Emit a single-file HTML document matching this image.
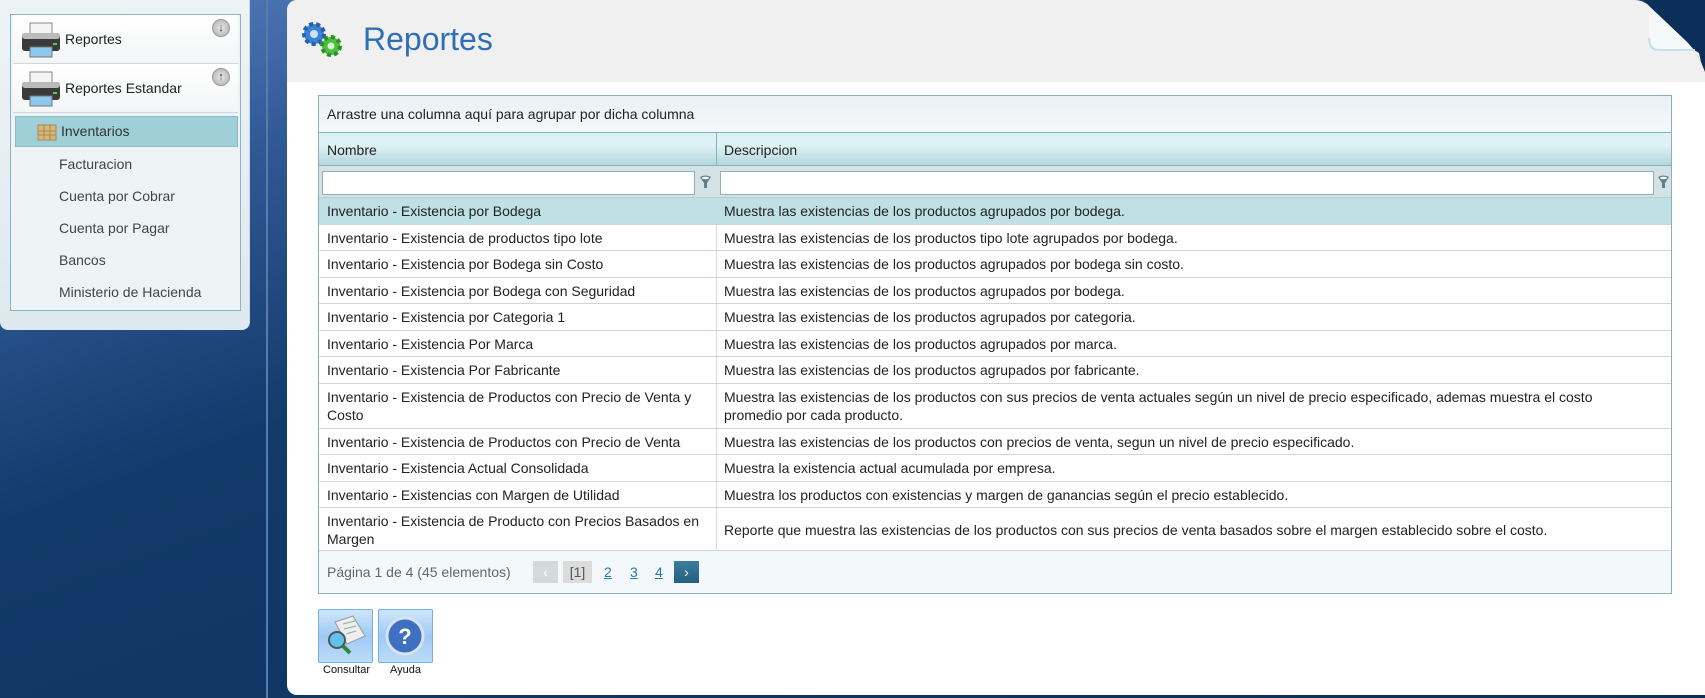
<!DOCTYPE html>
<html><head><meta charset="utf-8"><style>
*{box-sizing:border-box;margin:0;padding:0}
body{width:1705px;height:698px;overflow:hidden;position:relative;font-family:"Liberation Sans",sans-serif;background:linear-gradient(160deg,#5a82c4 0%,#2f5a96 18%,#123a6a 40%,#0c2f5a 100%);}
.side{position:absolute;left:0;top:0;width:250px;height:330px;background:linear-gradient(#eef3f6,#dde9ee);border-radius:0 0 8px 8px;border-right:1px solid #c8d8e0}
.inner{position:absolute;left:10px;top:14px;width:231px;height:297px;border:1px solid #8ab5c0;background:#eef3f5}
.hd{position:absolute;left:2px;width:225px;height:49px;background:linear-gradient(#fff,#f3f5f6);border-bottom:1px solid #d0d8dc;font-size:14px;color:#222}
.hd span{position:absolute;left:52px;top:16px}
.pr{position:absolute;left:8px;top:6px;width:40px;height:38px}
.arr{position:absolute;right:8px;top:4px;width:18px;height:18px;border-radius:50%;background:radial-gradient(#e8e8e8,#aaa);border:1px solid #999;font-size:11px;font-weight:bold;text-align:center;line-height:16px;color:#333}
.sel{position:absolute;left:4px;top:101px;width:223px;height:31px;background:#9fcfd7;border:1px solid #8bbcc6;font-size:14px;color:#333}
.it{position:absolute;left:48px;font-size:14px;color:#444}
.vline{position:absolute;left:266px;top:0;width:2px;height:698px;background:#5a7aa8}
.main{position:absolute;left:287px;top:0;width:1418px;height:695px;background:#fff;border-radius:10px 0 0 10px}
.top{position:absolute;left:0;top:0;width:1418px;height:82px;background:#f0f0f0;border-radius:10px 0 0 0}
.title{position:absolute;left:76px;top:21px;font-size:32px;color:#2f6fb5}
.grid{position:absolute;left:31px;top:95px;width:1354px;height:499px;border:1px solid #85b2ba;font-size:14px;color:#222}
.grp{height:37px;background:linear-gradient(#eaf0f3,#f5f8fb);border-bottom:1px solid #85b2ba;padding:10px 8px}
.ch{height:33px;background:linear-gradient(#def1f4 40%,#b3d7dc);border-bottom:1px solid #85b2ba;position:relative}
.ch div{position:absolute;top:9px}
.flt{height:32px;background:#d4e2e6;position:relative;border-bottom:1px solid #b8cfd4}
.flt .in{position:absolute;top:5px;height:24px;background:#fff;border:1px solid #8fb0b6}
.flt svg{position:absolute;top:9px}
.row{position:relative;border-bottom:1px solid #c9d8dc;height:26.5px}
.row div{position:absolute;top:4px;line-height:18px}
.row .a{left:8px;width:385px}.row .b{left:405px;width:915px}
.row .sep{position:absolute;left:397px;top:0;bottom:0;width:1px;background:#d2dee1}
.pg{position:absolute;left:0;bottom:0;width:100%;height:43px;background:#f3f8fa;border-top:1px solid #c9d8dc;color:#666}
.btn{position:absolute;top:609px;width:55px;height:54px;border:1px solid #7aaee0;border-radius:2px;background:linear-gradient(#cfe6fb,#9fcaf4 50%,#bcdcfa)}
.lbl{position:absolute;top:664px;font-size:11px;color:#111}
</style></head><body>
<div class="side"><div class="inner">
<div class="hd" style="top:0"><svg class="pr" viewBox="0 0 40 38"><rect x="9" y="2" width="22" height="12" fill="#f4f4f4" stroke="#888"/><rect x="1" y="12" width="38" height="18" rx="3" fill="#3a3a3a"/><rect x="1" y="12" width="38" height="6" rx="3" fill="#bbb"/><rect x="9" y="26" width="22" height="10" fill="#8fc8ef" stroke="#777"/><rect x="32" y="22" width="4" height="2" fill="#5c5"/></svg><span>Reportes</span><div class="arr">↓</div></div>
<div class="hd" style="top:49px"><svg class="pr" viewBox="0 0 40 38"><rect x="9" y="2" width="22" height="12" fill="#f4f4f4" stroke="#888"/><rect x="1" y="12" width="38" height="18" rx="3" fill="#3a3a3a"/><rect x="1" y="12" width="38" height="6" rx="3" fill="#bbb"/><rect x="9" y="26" width="22" height="10" fill="#8fc8ef" stroke="#777"/><rect x="32" y="22" width="4" height="2" fill="#5c5"/></svg><span>Reportes Estandar</span><div class="arr">↑</div></div>
<div class="sel"><svg style="position:absolute;left:21px;top:5px" width="20" height="19" viewBox="0 0 20 19"><rect x="1" y="3" width="18" height="15" fill="#d8b77a" stroke="#a98850"/><path d="M1 9h18M1 13h18M7 3v15M13 3v15" stroke="#a98850"/></svg><span style="position:absolute;left:45px;top:6px">Inventarios</span></div>
<div class="it" style="top:141px">Facturacion</div>
<div class="it" style="top:173px">Cuenta por Cobrar</div>
<div class="it" style="top:205px">Cuenta por Pagar</div>
<div class="it" style="top:237px">Bancos</div>
<div class="it" style="top:269px">Ministerio de Hacienda</div>
</div></div>
<div class="vline"></div>
<div class="main">
<div class="top"></div>
<svg style="position:absolute;left:1348px;top:0" width="70" height="82" viewBox="0 0 70 82"><path d="M0 0H70V72L66 62Q60 50 52 42L14 6Q8 0 0 0z" fill="#0c2f5a"/><path d="M6 0Q10 1 14 6L52 42Q60 50 66 62L64 53Q60 50 56 50L22 50Q14 50 14 42L14 10Q14 3 6 0z" fill="#f6f9fa"/><path d="M14 38Q14 50 24 50L60 50" fill="none" stroke="#c5e0e8" stroke-width="2"/></svg>
<svg style="position:absolute;left:12px;top:20px" width="48" height="40" viewBox="0 0 48 40"><circle cx="15" cy="14" r="10" fill="#3b82d8" stroke="#2a5fa8" stroke-dasharray="4 3" stroke-width="4"/><circle cx="15" cy="14" r="4" fill="#cfe3f7"/><circle cx="32" cy="26" r="9" fill="#4cbf3c" stroke="#2f8f2a" stroke-dasharray="4 3" stroke-width="4"/><circle cx="32" cy="26" r="3.5" fill="#d9f2d0"/></svg>
<div class="title">Reportes</div>
<div class="grid">
<div class="grp">Arrastre una columna aquí para agrupar por dicha columna</div>
<div class="ch"><div style="left:8px">Nombre</div><div style="left:405px">Descripcion</div><span style="position:absolute;left:397px;top:0;bottom:0;width:1px;background:#85b2ba"></span></div>
<div class="flt"><div class="in" style="left:3px;width:373px"></div><svg style="left:380px" width="13" height="14" viewBox="0 0 13 14"><path d="M1 2Q6.5 -1 12 2L8 8V13H5V8z" fill="#5f7f8a"/><ellipse cx="6.5" cy="3" rx="3.5" ry="1.3" fill="#fff"/></svg><div class="in" style="left:401px;width:934px"></div><svg style="left:1338px" width="13" height="14" viewBox="0 0 13 14"><path d="M1 2Q6.5 -1 12 2L8 8V13H5V8z" fill="#5f7f8a"/><ellipse cx="6.5" cy="3" rx="3.5" ry="1.3" fill="#fff"/></svg></div>
<div class="row" style="background:#bfe0e5"><span class="sep"></span><div class="a">Inventario - Existencia por Bodega</div><div class="b">Muestra las existencias de los productos agrupados por bodega.</div></div>
<div class="row"><span class="sep"></span><div class="a">Inventario - Existencia de productos tipo lote</div><div class="b">Muestra las existencias de los productos tipo lote agrupados por bodega.</div></div>
<div class="row"><span class="sep"></span><div class="a">Inventario - Existencia por Bodega sin Costo</div><div class="b">Muestra las existencias de los productos agrupados por bodega sin costo.</div></div>
<div class="row"><span class="sep"></span><div class="a">Inventario - Existencia por Bodega con Seguridad</div><div class="b">Muestra las existencias de los productos agrupados por bodega.</div></div>
<div class="row"><span class="sep"></span><div class="a">Inventario - Existencia por Categoria 1</div><div class="b">Muestra las existencias de los productos agrupados por categoria.</div></div>
<div class="row"><span class="sep"></span><div class="a">Inventario - Existencia Por Marca</div><div class="b">Muestra las existencias de los productos agrupados por marca.</div></div>
<div class="row"><span class="sep"></span><div class="a">Inventario - Existencia Por Fabricante</div><div class="b">Muestra las existencias de los productos agrupados por fabricante.</div></div>
<div class="row" style="height:45px"><span class="sep"></span><div class="a">Inventario - Existencia de Productos con Precio de Venta y Costo</div><div class="b">Muestra las existencias de los productos con sus precios de venta actuales según un nivel de precio especificado, ademas muestra el costo<br>promedio por cada producto.</div></div>
<div class="row"><span class="sep"></span><div class="a">Inventario - Existencia de Productos con Precio de Venta</div><div class="b">Muestra las existencias de los productos con precios de venta, segun un nivel de precio especificado.</div></div>
<div class="row"><span class="sep"></span><div class="a">Inventario - Existencia Actual Consolidada</div><div class="b">Muestra la existencia actual acumulada por empresa.</div></div>
<div class="row"><span class="sep"></span><div class="a">Inventario - Existencias con Margen de Utilidad</div><div class="b">Muestra los productos con existencias y margen de ganancias según el precio establecido.</div></div>
<div class="row" style="height:45px"><span class="sep"></span><div class="a">Inventario - Existencia de Producto con Precios Basados en Margen</div><div class="b" style="top:13px">Reporte que muestra las existencias de los productos con sus precios de venta basados sobre el margen establecido sobre el costo.</div></div>
<div class="pg">
<span style="position:absolute;left:8px;top:13px">Página 1 de 4 (45 elementos)</span>
<span style="position:absolute;left:214px;top:10px;width:25px;height:22px;background:#d4dadc;color:#fff;text-align:center;line-height:22px">‹</span>
<span style="position:absolute;left:244px;top:10px;width:29px;height:22px;background:#dcdcdc;text-align:center;line-height:22px;color:#555">[1]</span>
<span style="position:absolute;left:285px;top:13px;color:#2a78a8;text-decoration:underline">2</span>
<span style="position:absolute;left:311px;top:13px;color:#2a78a8;text-decoration:underline">3</span>
<span style="position:absolute;left:336px;top:13px;color:#2a78a8;text-decoration:underline">4</span>
<span style="position:absolute;left:355px;top:10px;width:25px;height:22px;background:linear-gradient(#3c7ea0,#245f80);color:#fff;text-align:center;line-height:22px">›</span>
</div>
</div>
<div class="btn" style="left:31px"><svg width="53" height="52" viewBox="0 0 53 52"><path d="M16 12l18-6 12 20-18 8z" fill="#eee" stroke="#999"/><path d="M24 14l12-3M25 19l12-3M27 24l10-3" stroke="#8aa" /><circle cx="18" cy="30" r="8" fill="#5fc3f0" stroke="#555" stroke-width="2"/><path d="M24 36l7 7" stroke="#2a8a3a" stroke-width="4"/></svg></div>
<div class="lbl" style="left:36px">Consultar</div>
<div class="btn" style="left:91px"><svg width="53" height="52" viewBox="0 0 53 52"><circle cx="26" cy="26" r="18" fill="#3f6fc0" stroke="#d8e2ee" stroke-width="3"/><text x="26" y="34" text-anchor="middle" font-family="Liberation Sans" font-weight="bold" font-size="22" fill="#fff">?</text></svg></div>
<div class="lbl" style="left:103px">Ayuda</div>
</div>
</body></html>
